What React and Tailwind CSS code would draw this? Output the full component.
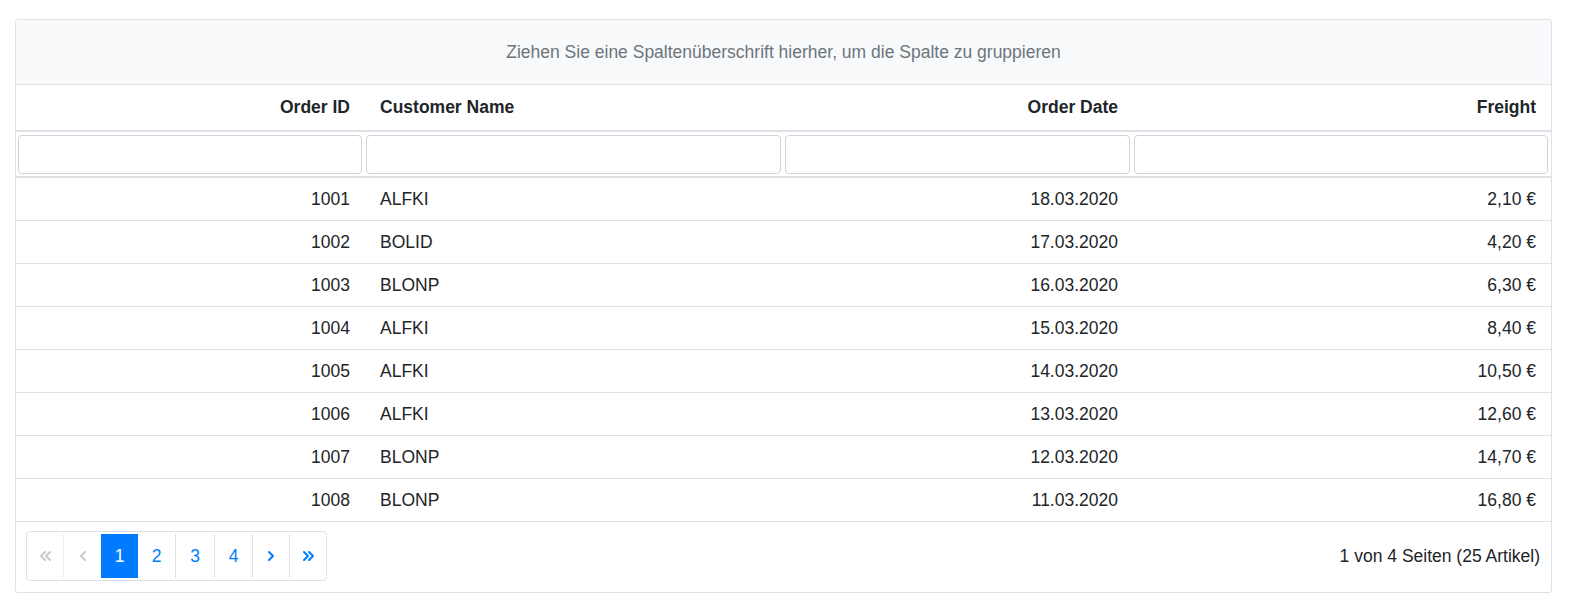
import React from 'react';

const rows = [
  { id: 1001, customer: 'ALFKI', date: '18.03.2020', freight: '2,10 €' },
  { id: 1002, customer: 'BOLID', date: '17.03.2020', freight: '4,20 €' },
  { id: 1003, customer: 'BLONP', date: '16.03.2020', freight: '6,30 €' },
  { id: 1004, customer: 'ALFKI', date: '15.03.2020', freight: '8,40 €' },
  { id: 1005, customer: 'ALFKI', date: '14.03.2020', freight: '10,50 €' },
  { id: 1006, customer: 'ALFKI', date: '13.03.2020', freight: '12,60 €' },
  { id: 1007, customer: 'BLONP', date: '12.03.2020', freight: '14,70 €' },
  { id: 1008, customer: 'BLONP', date: '11.03.2020', freight: '16,80 €' },
];

const cols = 'grid grid-cols-[348px_419px_349px_418px]';

function Chevron({ double, left, color }) {
  const one = left ? 'M7 2 L3 6 L7 10' : 'M3 2 L7 6 L3 10';
  const two = left ? 'M12 2 L8 6 L12 10' : 'M8 2 L12 6 L8 10';
  return (
    <svg width={double ? 15 : 10} height="12" viewBox={double ? '0 0 15 12' : '0 0 10 12'} fill="none">
      <path d={one} stroke={color} strokeWidth="2" strokeLinecap="round" strokeLinejoin="round" />
      {double && <path d={two} stroke={color} strokeWidth="2" strokeLinecap="round" strokeLinejoin="round" />}
    </svg>
  );
}

export default function App() {
  return (
    <div className="bg-white w-[1571px] h-[610px] pt-[19px] pl-[15px] font-['Liberation_Sans',Arial,sans-serif] text-[17.5px] text-[#212529]">
      <div className="w-[1537px] border border-[#dee2e6] rounded-[3px] overflow-hidden">
        <div className="h-[65px] bg-[#f8f9fa] border-b border-[#dee2e6] flex items-center justify-center text-[#6c757d]">
          Ziehen Sie eine Spaltenüberschrift hierher, um die Spalte zu gruppieren
        </div>

        <div className={`${cols} h-[47px] border-b-2 border-[#dee2e6] font-bold items-center`}>
          <div className="text-right pr-[14px]">Order ID</div>
          <div className="pl-4">Customer Name</div>
          <div className="text-right pr-[14px]">Order Date</div>
          <div className="text-right pr-[14px]">Freight</div>
        </div>

        <div className={`${cols} h-[46px] border-b-2 border-[#dee2e6] pt-[3px]`}>
          {[0, 1, 2, 3].map(i => (
            <div key={i} className="px-[2px]">
              <input className="w-full h-[39px] border border-[#ced4da] rounded-[4px] bg-white outline-none" />
            </div>
          ))}
        </div>

        {rows.map(row => (
          <div key={row.id} className={`${cols} h-[43px] border-b border-[#dee2e6] items-center`}>
            <div className="text-right pr-[14px]">{row.id}</div>
            <div className="pl-4">{row.customer}</div>
            <div className="text-right pr-[14px]">{row.date}</div>
            <div className="text-right pr-[14px]">{row.freight}</div>
          </div>
        ))}

        <div className="h-[70px] flex items-center justify-between pl-[10px] pr-[11px] pb-[2px]">
          <div className="flex border border-[#dee2e6] rounded-[4px] py-[2px]">
            <div className="w-[37px] h-[44px] flex items-center justify-center border-r border-[#eeeeee]">
              <Chevron double left color="#c7c9cc" />
            </div>
            <div className="w-[37px] h-[44px] flex items-center justify-center">
              <Chevron left color="#c7c9cc" />
            </div>
            <div className="w-[37px] h-[44px] flex items-center justify-center bg-[#007bff] text-white">1</div>
            <div className="w-[38px] h-[44px] flex items-center justify-center border-r border-[#dee2e6] text-[#007bff]">2</div>
            <div className="w-[39px] h-[44px] flex items-center justify-center border-r border-[#dee2e6] text-[#007bff]">3</div>
            <div className="w-[38px] h-[44px] flex items-center justify-center border-r border-[#dee2e6] text-[#007bff]">4</div>
            <div className="w-[37px] h-[44px] flex items-center justify-center border-r border-[#dee2e6]">
              <Chevron color="#007bff" />
            </div>
            <div className="w-[36px] h-[44px] flex items-center justify-center">
              <Chevron double color="#007bff" />
            </div>
          </div>
          <div>1 von 4 Seiten (25 Artikel)</div>
        </div>
      </div>
    </div>
  );
}
